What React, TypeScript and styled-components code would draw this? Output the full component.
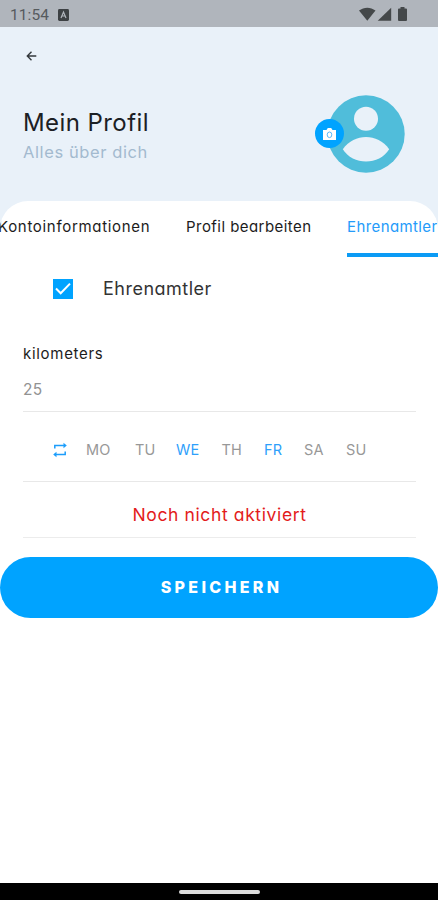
import React from 'react';
import styled, { createGlobalStyle } from 'styled-components';

const BLUE = '#00a3ff';

const GlobalStyle = createGlobalStyle`
  *, *::before, *::after { box-sizing: border-box; }
  body {
    margin: 0;
    background: #fff;
    font-family: Inter, 'Open Sans', sans-serif;
    font-feature-settings: 'cv11' 1;
    overflow: hidden;
  }
`;

const Screen = styled.div`
  width: 438px;
  height: 900px;
  display: flex;
  flex-direction: column;
  background: #fff;
  overflow: hidden;
`;

const StatusBar = styled.div`
  flex: none;
  height: 27px;
  display: flex;
  align-items: center;
  padding: 2px 31px 0 10px;
  background: #b0b5bc;
  color: #565a5e;
  font: 400 15.5px/20px Roboto, sans-serif;
  svg { display: block; }
`;

const Clock = styled.span`
  width: 48px;
  letter-spacing: 0.1px;
`;

const StatusIcons = styled.div`
  margin-left: auto;
  display: flex;
  align-items: center;
  color: #44484a;
`;

const Header = styled.header`
  flex: none;
  height: 174px;
  background: #e9f1f9;
  padding: 22px 33px 0 23px;
`;

const BackButton = styled.button`
  display: block;
  width: 16px;
  height: 14px;
  margin-left: 1px;
  padding: 0;
  border: 0;
  background: none;
  svg { display: block; margin-left: 2px; }
`;

const Profile = styled.div`
  display: flex;
  justify-content: space-between;
  margin-top: 32px;
`;

const Title = styled.h1`
  margin: 12px 0 0;
  font-size: 24px;
  line-height: 32px;
  font-weight: 400;
  letter-spacing: 0.42px;
  color: #1c2024;
  white-space: nowrap;
`;

const Subtitle = styled.p`
  margin: 1px 0 0;
  font-size: 16.5px;
  line-height: 24px;
  font-weight: 400;
  letter-spacing: 0.6px;
  color: #a3bacf;
`;

const Avatar = styled.div`
  position: relative;
  width: 78px;
  height: 78px;
  svg { display: block; }
`;

const CameraBadge = styled.div`
  position: absolute;
  left: -12px;
  top: 24px;
  width: 29px;
  height: 29px;
  border-radius: 50%;
  background: ${BLUE};
  display: grid;
  place-items: center;
`;

const SheetTop = styled.div`
  flex: none;
  height: 57px;
  background: linear-gradient(#e9f1f9, #e9f1f9) top / 100% 40px no-repeat;
`;

const Tabs = styled.nav`
  height: 57px;
  display: flex;
  gap: 36px;
  overflow: hidden;
  background: #fff;
  border-radius: 28px 28px 0 0;
`;

const Tab = styled.div<{ $width: number; $spacing: number; $active?: boolean }>`
  flex: none;
  width: ${p => p.$width}px;
  height: 56px;
  padding-top: 15px;
  font-size: 15px;
  line-height: 22px;
  font-weight: 400;
  letter-spacing: ${p => p.$spacing}px;
  white-space: nowrap;
  color: ${p => (p.$active ? '#249bfa' : '#1c1c1c')};
  border-bottom: 4px solid ${p => (p.$active ? '#0b9bf5' : 'transparent')};
  &:first-child { margin-left: -2px; }
`;

const VolunteerRow = styled.label`
  flex: none;
  display: flex;
  align-items: center;
  gap: 30px;
  height: 62px;
  padding-left: 53px;
`;

const Checkbox = styled.span`
  width: 20px;
  height: 20px;
  margin-top: -1px;
  background: ${BLUE};
  display: grid;
  place-items: center;
`;

const VolunteerLabel = styled.span`
  font-size: 18px;
  line-height: 26px;
  letter-spacing: 0.5px;
  color: #333;
`;

const Form = styled.section`
  flex: none;
  margin: 20px 22px 0 23px;
  display: flex;
  flex-direction: column;
`;

const FieldLabel = styled.div`
  height: 26px;
  padding-top: 1px;
  font-size: 15px;
  line-height: 26px;
  font-weight: 400;
  letter-spacing: 0.7px;
  color: #1c1c1c;
`;

const FieldValue = styled.div`
  height: 46px;
  padding-top: 13px;
  font-size: 15.5px;
  line-height: 22px;
  letter-spacing: 0.4px;
  color: #929292;
  border-bottom: 1.5px solid #e8e8e8;
`;

const Days = styled.div`
  height: 70px;
  display: grid;
  grid-template-columns: 33px 49px 41px 45.5px 42.5px 40px 42px 30px;
  align-items: center;
  padding: 7px 0 0 30px;
  border-bottom: 1.5px solid #e8e8e8;
`;

const Day = styled.span<{ $on?: boolean }>`
  font-size: 14.5px;
  line-height: 22px;
  letter-spacing: 0.1px;
  color: ${p => (p.$on ? '#2e9ffb' : '#989898')};
`;

const Notice = styled.div`
  height: 56px;
  padding-top: 20px;
  text-align: center;
  font-size: 17.5px;
  line-height: 26px;
  letter-spacing: 0.62px;
  color: #e31b1b;
  border-bottom: 1px solid #ececec;
`;

const SaveButton = styled.button`
  flex: none;
  width: 438px;
  height: 61px;
  margin-top: 19px;
  padding: 0 0 2px 5px;
  border: 0;
  border-radius: 31px;
  background: ${BLUE};
  color: #fff;
  font: 800 16px/24px Inter, sans-serif;
  letter-spacing: 3.3px;
`;

const NavBar = styled.div`
  flex: none;
  height: 17px;
  margin-top: auto;
  background: #000;
  display: grid;
  place-items: center;
  padding-top: 1px;
`;

const HomeHandle = styled.div`
  width: 81px;
  height: 4px;
  border-radius: 2px;
  background: #ddd;
`;

const DAYS = [
  { name: 'MO' }, { name: 'TU' }, { name: 'WE', on: true }, { name: 'TH' },
  { name: 'FR', on: true }, { name: 'SA' }, { name: 'SU' },
];

export default function App() {
  return (
    <Screen>
      <GlobalStyle />
      <StatusBar>
        <Clock>11:54</Clock>
        <svg width="11" height="12" viewBox="0 0 11 12">
          <rect width="11" height="12" rx="1.4" fill="#3d4144" />
          <path d="M3 9 5.5 3 8 9M3.8 7h3.4" fill="none" stroke="#b0b5bc" strokeWidth="1.2" />
        </svg>
        <StatusIcons>
          <svg width="39" height="15" viewBox="0 0 39 15" fill="currentColor">
            <path d="M0 3.6C5-.3 11.5-.3 16.5 3.6L8.3 13.7Z" />
            <path d="M32.5 1v13H19Z" transform="translate(-.3 -.3)" />
          </svg>
          <svg width="9" height="15" viewBox="0 0 9 15" fill="currentColor">
            <path d="M2.5 0h4v1.5H8q1 0 1 1V13q0 1-1 1H1q-1 0-1-1V2.5q0-1 1-1h1.5Z" />
          </svg>
        </StatusIcons>
      </StatusBar>

      <Header>
        <BackButton aria-label="Zurück">
          <svg width="11" height="14" viewBox="0 0 11 14" fill="none" stroke="#33383c" strokeWidth="1.4">
            <path d="M10.3 7H1.5M5.5 2.8 1.3 7l4.2 4.2" />
          </svg>
        </BackButton>
        <Profile>
          <div>
            <Title>Mein Profil</Title>
            <Subtitle>Alles über dich</Subtitle>
          </div>
          <Avatar>
            <svg width="78" height="78" viewBox="0 0 79 79">
              <circle cx="39.5" cy="39.5" r="39.2" fill="#50bdda" />
              <circle cx="39.5" cy="24" r="12.2" fill="#e9f1f9" />
              <path d="M16 55C28 38.5 51 38.5 63 55C53 71.5 26 71.5 16 55Z" fill="#e9f1f9" />
            </svg>
            <CameraBadge>
              <svg width="13" height="12" viewBox="0 0 13 12">
                <path d="M0 2h3.5L4.8 0h3.4L9.5 2H13v10H0Z" fill="#fff" />
                <ellipse cx="6.5" cy="6.8" rx="2.3" ry="2.8" fill="#fff" stroke="#58b8fa" />
              </svg>
            </CameraBadge>
          </Avatar>
        </Profile>
      </Header>

      <SheetTop>
        <Tabs>
          <Tab $width={152} $spacing={0.69}>Kontoinformationen</Tab>
          <Tab $width={125} $spacing={0.45}>Profil bearbeiten</Tab>
          <Tab $width={92} $spacing={0.4} $active>Ehrenamtler</Tab>
        </Tabs>
      </SheetTop>

      <VolunteerRow>
        <Checkbox>
          <svg width="16" height="13" viewBox="0 0 16 13" fill="none" stroke="#fff" strokeWidth="2">
            <path d="m1 6.5 4.7 4.7L15 1.6" />
          </svg>
        </Checkbox>
        <VolunteerLabel>Ehrenamtler</VolunteerLabel>
      </VolunteerRow>

      <Form>
        <FieldLabel>kilometers</FieldLabel>
        <FieldValue>25</FieldValue>
        <Days>
          <svg width="14" height="16" viewBox="0 0 14 16" fill="none" stroke="#1c9dfb" strokeWidth="1.5">
            <path d="M1.8 6.5V3.5H11M12.2 9.5v3H3" />
            <path d="M10.5.7 13.8 3.5l-3.3 2.800ZM3.5 9.700.2 12.500l3.300 2.800Z" fill="#1c9dfb" stroke="none" />
          </svg>
          {DAYS.map(d => <Day key={d.name} $on={d.on}>{d.name}</Day>)}
        </Days>
        <Notice>Noch nicht aktiviert</Notice>
      </Form>

      <SaveButton>SPEICHERN</SaveButton>

      <NavBar><HomeHandle /></NavBar>
    </Screen>
  );
}
